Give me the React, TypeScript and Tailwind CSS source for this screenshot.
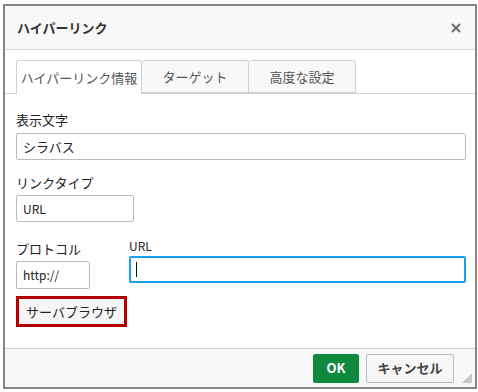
const font = "font-['Noto_Sans_CJK_JP','Noto_Sans',sans-serif]"

export default function App() {
  return (
    <div className={`h-[392px] w-[478px] bg-white pl-[3px] pt-[4px] ${font}`}>
      <div className="relative flex h-[385px] w-[474px] flex-col border-2 border-[#868686] bg-white">
        {/* header */}
        <div className="flex h-[44px] items-center justify-between border-b border-[#d8d8d8] bg-[#f8f8f8] pl-[12px] pr-[14px]">
          <span className="text-[13px] font-bold text-[#333]">ハイパーリンク</span>
          <svg width="10" height="10" viewBox="0 0 10 10" className="mt-[1px]">
            <path d="M1 1 L9 9 M9 1 L1 9" stroke="#777" strokeWidth="2.4" />
          </svg>
        </div>

        {/* tabs */}
        <div className="mt-[10px] flex h-[34px] border-b border-[#d1d1d1] pl-[11px]">
          <div className="-mb-px flex w-[126px] items-center justify-center rounded-t-[3px] border border-b-0 border-[#d1d1d1] bg-white text-[13px] text-[#555]">
            ハイパーリンク情報
          </div>
          <div className="flex w-[107px] items-center justify-center rounded-t-[3px] border border-l-0 border-[#d1d1d1] bg-[#f8f8f8] text-[13px] text-[#555]">
            ターゲット
          </div>
          <div className="flex w-[107px] items-center justify-center rounded-t-[3px] border border-l-0 border-[#d1d1d1] bg-[#f8f8f8] text-[13px] text-[#555]">
            高度な設定
          </div>
        </div>

        {/* body */}
        <div className="flex-1 pl-[11px] pr-[9px] text-[13px] text-[#222]">
          <div className="mt-[17px] leading-[18px]">表示文字</div>
          <div className="mt-[4px] flex h-[27px] w-[450px] items-center rounded-[2px] border border-[#bcbcbc] px-[6px]">
            シラバス
          </div>

          <div className="mt-[14px] leading-[18px]">リンクタイプ</div>
          <div className="mt-[3px] flex h-[27px] w-[118px] items-center rounded-[2px] border border-[#bcbcbc] px-[6px] text-[12px]">
            URL
          </div>

          <div className="mt-[15px] flex">
            <div className="w-[74px]">
              <div className="mt-[3px] leading-[18px]">プロトコル</div>
              <div className="mt-[3px] flex h-[28px] w-[74px] items-center rounded-[2px] border border-[#bcbcbc] px-[6px] text-[12px]">
                http://
              </div>
            </div>
            <div className="ml-[39px]">
              <div className="leading-[18px] text-[12px]">URL</div>
              <div className="mt-[1px] flex h-[27px] w-[337px] items-center rounded-[2px] border-2 border-[#18a0f2] px-[5px]">
                <div className="h-[15px] w-px bg-[#111]" />
              </div>
            </div>
          </div>

          <div className="mt-[7px] flex h-[31px] w-[111px] items-center justify-center border-[3px] border-[#b40000] bg-[#f6f6f6] text-[13px] text-[#222]">
            サーバブラウザ
          </div>
        </div>

        {/* footer */}
        <div className="flex h-[39px] items-center justify-end gap-[7px] border-t border-[#d1d1d1] bg-[#f8f8f8] pr-[21px]">
          <div className="flex h-[29px] w-[46px] items-center justify-center rounded-[2px] bg-[#0e8a3f] text-[13px] font-bold text-white">
            OK
          </div>
          <div className="flex h-[29px] w-[88px] items-center justify-center rounded-[2px] border border-[#bcbcbc] bg-[#f6f6f6] text-[13px] font-bold text-[#444]">
            キャンセル
          </div>
        </div>
        <svg width="10" height="10" viewBox="0 0 10 10" className="absolute bottom-[4px] right-[3px]">
          <path d="M10 0 L10 10 L0 10 Z" fill="#c8c8c8" />
        </svg>
      </div>
    </div>
  )
}
